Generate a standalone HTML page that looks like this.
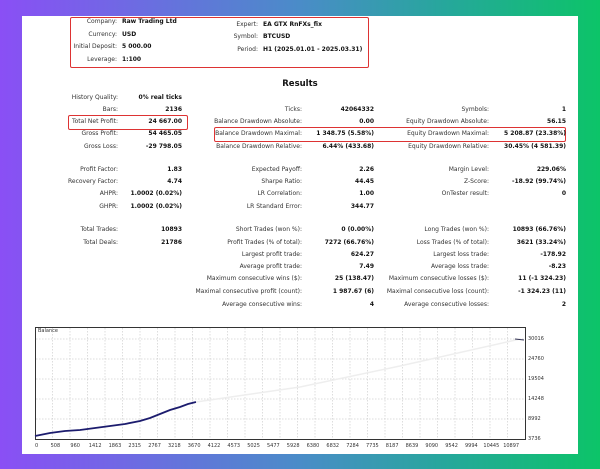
<!DOCTYPE html>
<html><head><meta charset="utf-8"><style>
body{margin:0;width:600px;height:469px;overflow:hidden;background:linear-gradient(90deg,#8a4ff5 0%,#6a6ee0 25%,#4a8cc8 50%,#25a89a 75%,#0cc468 100%);font-family:"DejaVu Sans","Liberation Sans",sans-serif;}
#p{position:absolute;left:22px;top:16px;width:556px;height:438px;background:#fff;}
.t{position:absolute;font-size:6px;color:#333;white-space:nowrap;line-height:8px;}
.l{text-align:right;}
.b{font-weight:bold;color:#111;}
.box{position:absolute;border:1.5px solid #dd3333;border-radius:2px;}
.ax{position:absolute;font-size:5px;color:#333;white-space:nowrap;}
</style></head><body>
<div id="p"></div>
<div class="box" style="left:70px;top:17px;width:297px;height:49px"></div>
<div class="box" style="left:68px;top:115px;width:118px;height:13px"></div>
<div class="box" style="left:214px;top:127px;width:350px;height:13px"></div>

<div id="c"></div>
<script>
var D=[
[117,22,'Company:',122,'Raw Trading Ltd',1],
[117,35,'Currency:',122,'USD',1],
[117,47,'Initial Deposit:',122,'5 000.00',1],
[117,60,'Leverage:',122,'1:100',1],
[258,25,'Expert:',263,'EA GTX RnFXs_fix',1],
[258,37,'Symbol:',263,'BTCUSD',1],
[258,50,'Period:',263,'H1 (2025.01.01 - 2025.03.31)',1]];
var h='';
D.forEach(function(d){h+='<div class="t l" style="right:'+(600-d[0])+'px;top:'+(d[1]-4)+'px">'+d[2]+'</div><div class="t b" style="left:'+d[3]+'px;top:'+(d[1]-4)+'px">'+d[4]+'</div>';});
function r(lx,vx,y,lab,val){if(lab)h+='<div class="t l" style="right:'+(600-lx)+'px;top:'+(y-4)+'px">'+lab+'</div>';if(val)h+='<div class="t l b" style="right:'+(600-vx)+'px;top:'+(y-4)+'px">'+val+'</div>';}
var R=[
[98,['History Quality:','0% real ticks'],null,null],
[110,['Bars:','2136'],['Ticks:','42064332'],['Symbols:','1']],
[122,['Total Net Profit:','24 667.00'],['Balance Drawdown Absolute:','0.00'],['Equity Drawdown Absolute:','56.15']],
[134,['Gross Profit:','54 465.05'],['Balance Drawdown Maximal:','1 348.75 (5.58%)'],['Equity Drawdown Maximal:','5 208.87 (23.38%)']],
[147,['Gross Loss:','-29 798.05'],['Balance Drawdown Relative:','6.44% (433.68)'],['Equity Drawdown Relative:','30.45% (4 581.39)']],
[170,['Profit Factor:','1.83'],['Expected Payoff:','2.26'],['Margin Level:','229.06%']],
[182,['Recovery Factor:','4.74'],['Sharpe Ratio:','44.45'],['Z-Score:','-18.92 (99.74%)']],
[194,['AHPR:','1.0002 (0.02%)'],['LR Correlation:','1.00'],['OnTester result:','0']],
[207,['GHPR:','1.0002 (0.02%)'],['LR Standard Error:','344.77'],null],
[230,['Total Trades:','10893'],['Short Trades (won %):','0 (0.00%)'],['Long Trades (won %):','10893 (66.76%)']],
[243,['Total Deals:','21786'],['Profit Trades (% of total):','7272 (66.76%)'],['Loss Trades (% of total):','3621 (33.24%)']],
[255,null,['Largest profit trade:','624.27'],['Largest loss trade:','-178.92']],
[267,null,['Average profit trade:','7.49'],['Average loss trade:','-8.23']],
[279,null,['Maximum consecutive wins ($):','25 (138.47)'],['Maximum consecutive losses ($):','11 (-1 324.23)']],
[292,null,['Maximal consecutive profit (count):','1 987.67 (6)'],['Maximal consecutive loss (count):','-1 324.23 (11)']],
[305,null,['Average consecutive wins:','4'],['Average consecutive losses:','2']]];
R.forEach(function(x){var y=x[0];if(x[1])r(118,182,y,x[1][0],x[1][1]);if(x[2])r(302,374,y,x[2][0],x[2][1]);if(x[3])r(489,566,y,x[3][0],x[3][1]);});
h+='<div class="t b" style="left:0;width:600px;text-align:center;top:79px;font-size:8.5px;line-height:10px">Results</div>';
var s='<svg style="position:absolute;left:0;top:0" width="600" height="469"><rect x="35.5" y="327.5" width="490" height="112" fill="#fff" stroke="#333" stroke-width="1"/>';
for(var i=1;i<28;i++){var x=35+i*17.5;s+='<line x1="'+x+'" y1="328" x2="'+x+'" y2="439" stroke="#bbb" stroke-width="0.5" stroke-dasharray="1.5,1.5"/>';}
for(var j=1;j<6;j++){var y=339+(j-1)*20;s+='<line x1="36" y1="'+y+'" x2="525" y2="'+y+'" stroke="#bbb" stroke-width="0.5" stroke-dasharray="1.5,1.5"/>';}
s+='<polyline points="35,436 50,433 65,431 80,430 95,428 110,426 125,424 140,421 150,418 160,414 170,410 180,407 188,404 196,402" fill="none" stroke="#1c1c6e" stroke-width="1.8"/>';
s+='<polyline points="196,402 300,387 400,366 520,339" fill="none" stroke="#eee" stroke-width="1.5"/>';
s+='<line x1="515" y1="339" x2="524" y2="340" stroke="#335" stroke-width="1"/>';
s+='</svg>';
h+=s;
h+='<div class="ax" style="left:38px;top:328px">Balance</div>';
var ya=['30016','24760','19504','14248','8992','3736'];
ya.forEach(function(v,k){h+='<div class="ax" style="left:528px;top:'+(336+k*20)+'px">'+v+'</div>';});
var xa=['0','508','960','1412','1863','2315','2767','3218','3670','4122','4573','5025','5477','5928','6380','6832','7284','7735','8187','8639','9090','9542','9994','10445','10897'];
xa.forEach(function(v,k){h+='<div class="ax" style="left:'+(35+k*19.8-(k?v.length*1.4:0))+'px;top:443px">'+v+'</div>';});
document.getElementById('c').innerHTML=h;
</script>
</body></html>
